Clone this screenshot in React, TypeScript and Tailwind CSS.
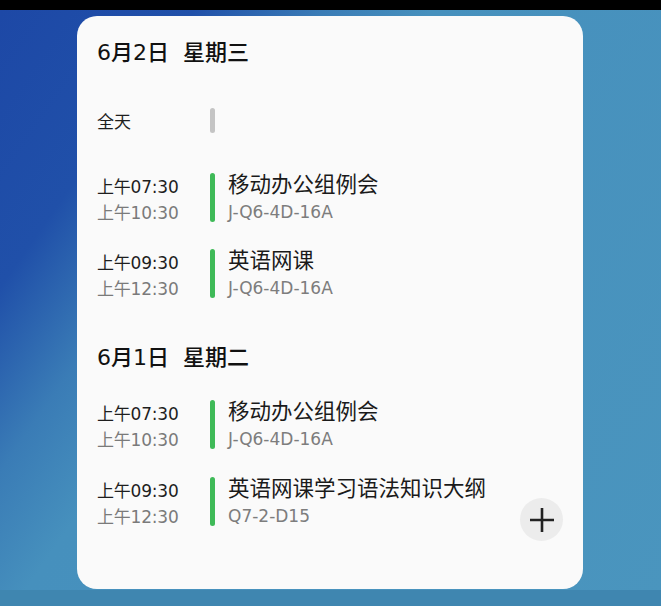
import React from "react";

const FONT = 'font-["DejaVu_Sans","Noto_Sans_CJK_SC",sans-serif]';
const CJK = 'font-["Noto_Sans_CJK_SC","Noto_Sans",sans-serif]';

type Ev = { start: string; end: string; title: string; sub: string };

function EventRow({ ev, className = "" }: { ev: Ev; className?: string }) {
  return (
    <div className={`flex items-start h-[49px] ${className}`}>
      <div className="w-[113px] flex flex-col">
        <div className={`h-[26px] leading-[26px] text-[17px] text-[#1e1e1e] ${FONT} tracking-[-0.2px]`}>
          <span className={CJK}>上午</span>
          {ev.start.replace("上午", "")}
        </div>
        <div className={`h-[26px] leading-[26px] text-[17px] text-[#7a7a7a] ${FONT} tracking-[-0.2px]`}>
          <span className={CJK}>上午</span>
          {ev.end.replace("上午", "")}
        </div>
      </div>
      <div className="w-[5px] h-[49px] rounded-full bg-[#3fba58]" />
      <div className="ml-[13px] flex flex-col">
        <div className={`h-[24px] leading-[24px] text-[21.5px] text-[#1a1a1a] ${CJK} mt-[-2px]`}>{ev.title}</div>
        <div className={`mt-[4px] h-[26px] leading-[26px] text-[17px] text-[#7d7d7d] ${FONT}`}>{ev.sub}</div>
      </div>
    </div>
  );
}

function Header({ day, week, className = "" }: { day: string; week: string; className?: string }) {
  return (
    <div className={`h-[30px] leading-[30px] text-[22px] font-medium text-[#111] ${CJK} ${className}`}>
      <span className={FONT}>6</span>
      <span>月</span>
      <span className={FONT}>{day}</span>
      <span>日</span>
      <span className="ml-[14px]">{week}</span>
    </div>
  );
}

export default function App() {
  const day2: Ev[] = [
    { start: "上午07:30", end: "上午10:30", title: "移动办公组例会", sub: "J-Q6-4D-16A" },
    { start: "上午09:30", end: "上午12:30", title: "英语网课", sub: "J-Q6-4D-16A" },
  ];
  const day1: Ev[] = [
    { start: "上午07:30", end: "上午10:30", title: "移动办公组例会", sub: "J-Q6-4D-16A" },
    { start: "上午09:30", end: "上午12:30", title: "英语网课学习语法知识大纲", sub: "Q7-2-D15" },
  ];
  return (
    <div className="w-[661px] h-[606px] overflow-hidden flex flex-col bg-black">
      <div className="h-[10px] bg-black shrink-0" />
      <div className="flex-1 relative bg-[linear-gradient(125deg,#1d48a6_0%,#2050a9_18%,#3a7cb6_30%,#4690bd_40%,#4a95be_100%)]">
        <div className="absolute left-0 right-0 bottom-0 h-[16px] bg-[#3f86b0]" />
        <div className="relative ml-[77px] mt-[6px] w-[506px] h-[573px] rounded-[20px] bg-[#fafafa] pl-[20px] pt-[19px]">
          <Header day="2" week="星期三" />
          <div className="mt-[43px] flex items-center h-[25px]">
            <div className={`w-[113px] text-[17px] text-[#1e1e1e] ${CJK} leading-[25px]`}>全天</div>
            <div className="w-[5px] h-[25px] rounded-full bg-[#c4c4c4]" />
          </div>
          <EventRow ev={day2[0]} className="mt-[40px]" />
          <EventRow ev={day2[1]} className="mt-[27px]" />
          <Header day="1" week="星期二" className="mt-[42px]" />
          <EventRow ev={day1[0]} className="mt-[30px]" />
          <EventRow ev={day1[1]} className="mt-[28px]" />
          <div className="absolute left-[443px] top-[482px] w-[43px] h-[43px] rounded-full bg-[#ececec] flex items-center justify-center">
            <svg width="26" height="26" viewBox="0 0 26 26">
              <path d="M13 1v24M1 13h24" stroke="#222" strokeWidth="2.6" />
            </svg>
          </div>
        </div>
      </div>
    </div>
  );
}
